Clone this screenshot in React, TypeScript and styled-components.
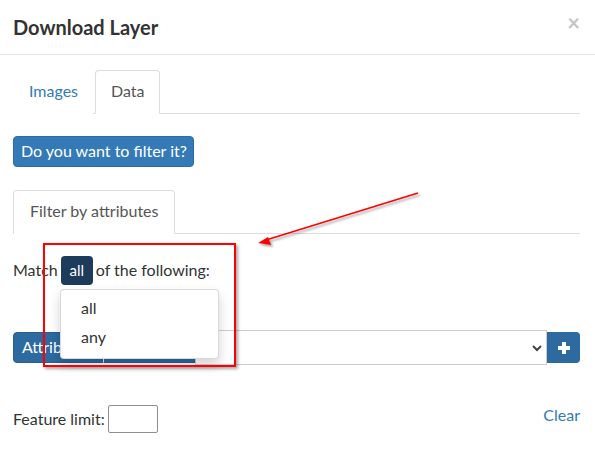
import styled, { createGlobalStyle } from "styled-components";

const GlobalStyle = createGlobalStyle`
    html, body {
        margin: 0;
        padding: 0;
        background: #ffffff;
    }
    body {
        font-family: Lato, "Open Sans", "Liberation Sans", sans-serif;
        font-size: 16px;
        color: #333333;
    }
    * {
        box-sizing: border-box;
    }
`

const StyledModal = styled.div`
    position: relative;
    width: 595px;
    height: 453px;
    overflow: hidden;
    background: #ffffff;
`

const StyledHeader = styled.div`
    display: flex;
    align-items: center;
    justify-content: space-between;
    height: 55px;
    padding: 0 15px 0 13px;
    border-bottom: 1px solid #e5e5e5;
`

const StyledTitle = styled.h4`
    margin: 0;
    font-size: 20px;
    font-weight: 700;
    line-height: 28px;
`

const StyledClose = styled.span`
    font-size: 22px;
    font-weight: 700;
    line-height: 1;
    color: #c4c4c4;
    margin-top: -9px;
`

const StyledBody = styled.div`
    padding: 15px 15px 15px 13px;
`

const StyledTabList = styled.div`
    display: flex;
    height: 44px;
    border-bottom: 1px solid #dddddd;
`

interface StyledTabProps {
    readonly $active?: boolean;
}

const StyledTab = styled.div<StyledTabProps>`
    display: flex;
    align-items: center;
    height: 44px;
    padding: 0 14px 3px 15px;
    margin-right: 2px;
    border: 1px solid transparent;
    border-radius: 4px 4px 0 0;
    background: #ffffff;
    ${({ $active }) => $active
        ? `border-color: #dddddd; border-bottom-color: #ffffff; color: #555555;`
        : `color: #337ab7;`}
`

const StyledSubTab = styled(StyledTab)`
    padding: 0 16px 3px 16px;
`

const StyledPane = styled.div`
    padding-top: 22px;
`

const StyledButton = styled.button`
    display: inline-flex;
    align-items: center;
    height: 31px;
    padding: 0 6px 3px 7px;
    border: 1px solid #2e6da4;
    border-radius: 4px;
    background: #337ab7;
    color: #ffffff;
    font-family: inherit;
    font-size: 16px;
`

const StyledSubTabs = styled(StyledTabList)`
    margin-top: 23px;
`

const StyledMatchRow = styled.div`
    position: relative;
    display: flex;
    align-items: center;
    gap: 3px;
    margin-top: 22px;
    height: 29px;
    padding-bottom: 3px;
`

const StyledMatchToggle = styled.span`
    display: inline-flex;
    align-items: center;
    justify-content: center;
    width: 32px;
    height: 29px;
    margin-bottom: -3px;
    border-radius: 4px;
    background: #1d3b5b;
    color: #ffffff;
    font-size: 15px;
    padding-bottom: 1px;
`

const StyledMenu = styled.ul`
    position: absolute;
    z-index: 5;
    top: 33px;
    left: 47px;
    width: 159px;
    margin: 0;
    padding: 5px 0;
    list-style: none;
    background: #ffffff;
    border: 1px solid rgba(0, 0, 0, 0.15);
    border-radius: 4px;
    box-shadow: 0 6px 12px rgba(0, 0, 0, 0.175);
`

const StyledMenuItem = styled.li`
    height: 29px;
    line-height: 25px;
    padding-left: 20px;
    color: #333333;
`

const StyledRuleRow = styled.div`
    display: flex;
    margin-top: 45px;
    height: 35px;
    align-items: center;
`

interface StyledGroupButtonProps {
    readonly $width: number;
    readonly $first?: boolean;
}

const StyledGroupButton = styled.span<StyledGroupButtonProps>`
    display: inline-flex;
    align-items: center;
    width: ${({ $width }) => $width}px;
    height: 31px;
    padding: 0 8px 3px 8px;
    background: #2c6aa0;
    border: 1px solid #285f91;
    color: #ffffff;
    white-space: nowrap;
    overflow: hidden;
    ${({ $first }) => $first ? `border-radius: 4px 0 0 4px;` : `border-left-color: #e8eef4;`}
`

const StyledSelect = styled.div`
    flex: 1;
    display: flex;
    align-items: center;
    justify-content: flex-end;
    height: 35px;
    padding-right: 3px;
    border: 1px solid #cccccc;
    background: #ffffff;
`

const StyledPlus = styled.span`
    display: inline-flex;
    align-items: center;
    justify-content: center;
    width: 33px;
    height: 31px;
    border-radius: 0 4px 4px 0;
    background: #2c6aa0;
`

const StyledFooterRow = styled.div`
    display: flex;
    align-items: center;
    justify-content: space-between;
    margin-top: 38px;
`

const StyledLimit = styled.label`
    display: flex;
    align-items: center;
    gap: 3px;
`

const StyledInput = styled.span`
    display: inline-block;
    width: 50px;
    height: 28px;
    margin-top: 2px;
    border: 1px solid #8f8f8f;
    border-radius: 2px;
`

const StyledLink = styled.a`
    color: #337ab7;
    text-decoration: none;
    margin-top: -8px;
`

const StyledHighlight = styled.div`
    position: absolute;
    z-index: 10;
    left: 43px;
    top: 243px;
    width: 193px;
    height: 124px;
    border: 2px solid #ff0000;
    box-shadow: 2px 2px 3px rgba(0, 0, 0, 0.35);
`

const StyledArrow = styled.svg`
    position: absolute;
    z-index: 10;
    left: 0;
    top: 0;
    pointer-events: none;
`

const App = () => {
    return (
        <StyledModal>
            <GlobalStyle />
            <StyledHeader>
                <StyledTitle>Download Layer</StyledTitle>
                <StyledClose>×</StyledClose>
            </StyledHeader>
            <StyledBody>
                <StyledTabList>
                    <StyledTab>Images</StyledTab>
                    <StyledTab $active>Data</StyledTab>
                </StyledTabList>
                <StyledPane>
                    <StyledButton>Do you want to filter it?</StyledButton>
                    <StyledSubTabs>
                        <StyledSubTab $active>Filter by attributes</StyledSubTab>
                    </StyledSubTabs>
                    <StyledMatchRow>
                        <span>Match</span>
                        <StyledMatchToggle>all</StyledMatchToggle>
                        <span>of the following:</span>
                        <StyledMenu>
                            <StyledMenuItem>all</StyledMenuItem>
                            <StyledMenuItem>any</StyledMenuItem>
                        </StyledMenu>
                    </StyledMatchRow>
                    <StyledRuleRow>
                        <StyledGroupButton $width={90} $first>Attribute</StyledGroupButton>
                        <StyledGroupButton $width={92}>Operator</StyledGroupButton>
                        <StyledSelect>
                            <svg width="12" height="12" viewBox="0 0 12 12">
                                <path d="M2 4 L6 8 L10 4" fill="none" stroke="#444" strokeWidth="2" />
                            </svg>
                        </StyledSelect>
                        <StyledPlus>
                            <svg width="16" height="16" viewBox="0 0 16 16">
                                <path d="M8 2 V14 M2 8 H14" stroke="#fff" strokeWidth="4" />
                            </svg>
                        </StyledPlus>
                    </StyledRuleRow>
                    <StyledFooterRow>
                        <StyledLimit>
                            Feature limit:
                            <StyledInput />
                        </StyledLimit>
                        <StyledLink href="#">Clear</StyledLink>
                    </StyledFooterRow>
                </StyledPane>
            </StyledBody>
            <StyledHighlight />
            <StyledArrow width="595" height="453" viewBox="0 0 595 453">
                <defs>
                    <filter id="arrow-shadow" x="-10%" y="-10%" width="130%" height="130%">
                        <feDropShadow dx="2" dy="2" stdDeviation="1.2" floodColor="#000" floodOpacity="0.35" />
                    </filter>
                </defs>
                <g filter="url(#arrow-shadow)">
                    <line x1="418" y1="193" x2="266" y2="240" stroke="#ff0000" strokeWidth="1.6" />
                    <polygon points="258,243 268,237 271,245" fill="#ff0000" />
                </g>
            </StyledArrow>
        </StyledModal>
    );
};

export default App;
